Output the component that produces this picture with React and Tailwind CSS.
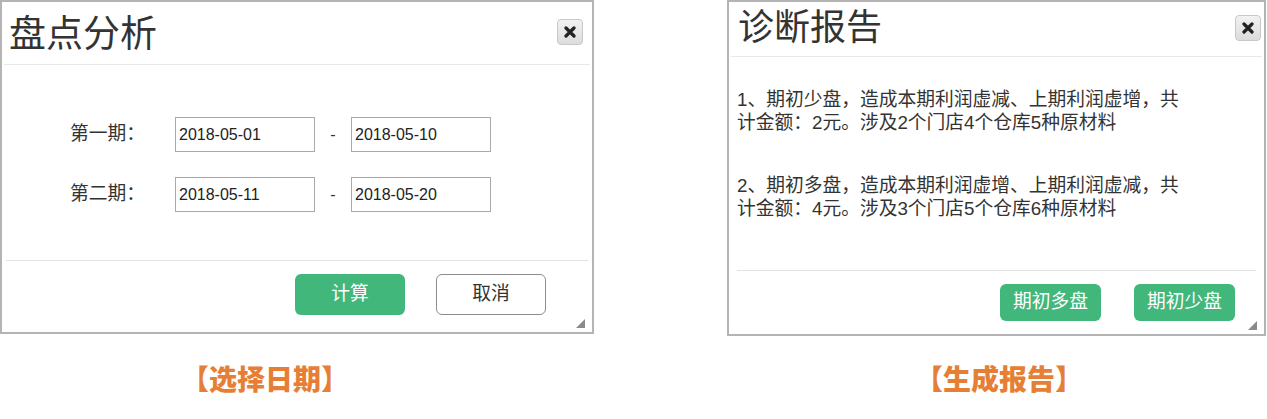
import React from 'react';

const cjk = { fontFamily: '"Liberation Sans", "Noto Sans CJK SC", sans-serif' };

const CloseBtn = () => (
    <button className="w-[26px] h-[26px] rounded-[4px] border border-[#c8c8c8] bg-gradient-to-b from-[#f2f2f2] to-[#dcdcdc] flex items-center justify-center">
        <svg width="12" height="12" viewBox="0 0 12 12">
            <path d="M2 2 L10 10 M10 2 L2 10" stroke="#222" strokeWidth="3.2" strokeLinecap="round" />
        </svg>
    </button>
);

const Grip = () => (
    <svg className="absolute right-[7px] bottom-[4px]" width="10" height="10" viewBox="0 0 10 10">
        <path d="M10 1 L10 10 L1 10 Z" fill="#8a8a8a" />
    </svg>
);

const DateInput = ({ value }) => (
    <div
        className="w-[140px] h-[35px] border border-[#a9a9a9] flex items-center pl-[3px] text-[16px] text-[#222]"
        style={{ fontFamily: '"Liberation Sans", Arial, sans-serif' }}
    >
        {value}
    </div>
);

const Period = ({ label, from, to }) => (
    <div className="flex items-center">
        <span className="w-[105px] text-[18.75px] text-[#333]">{label}</span>
        <DateInput value={from} />
        <span className="w-[36px] text-center text-[16px] text-[#333]">-</span>
        <DateInput value={to} />
    </div>
);

const Analysis = () => (
    <div className="relative w-[594px] h-[334px] border-2 border-[#b4b4b4] bg-white flex flex-col" style={cjk}>
        <div className="h-[63px] mx-[2px] border-b border-[#e8e8e8] flex items-center justify-between pl-[5px] pr-[7px]">
            <h2 className="text-[37px] leading-none text-[#333] pt-[3px]">盘点分析</h2>
            <div className="-mt-[2px]"><CloseBtn /></div>
        </div>
        <div className="h-[195px] flex flex-col gap-[25px] pt-[52px] pl-[68px]">
            <Period label="第一期：" from="2018-05-01" to="2018-05-10" />
            <Period label="第二期：" from="2018-05-11" to="2018-05-20" />
        </div>
        <div className="mx-[4px] border-t border-[#e2e2e2] flex justify-end gap-[31px] pt-[13px] pr-[42px]">
            <button className="w-[110px] h-[41px] rounded-[6px] bg-[#42b77b] text-white text-[18.75px]">计算</button>
            <button className="w-[110px] h-[41px] rounded-[6px] border border-[#8c8c8c] bg-white text-[#333] text-[18.75px]">取消</button>
        </div>
        <Grip />
    </div>
);

const Report = () => (
    <div className="relative w-[539px] h-[336px] border-2 border-[#b4b4b4] bg-white flex flex-col" style={cjk}>
        <div className="h-[55px] mx-[2px] border-b border-[#e8e8e8] flex items-center justify-between pl-[7px] pr-[1px]">
            <h2 className="text-[36px] leading-none text-[#333] pb-[2px]">诊断报告</h2>
            <div className="-mt-[3px]"><CloseBtn /></div>
        </div>
        <div className="h-[213px] pt-[31px] pl-[8px] text-[18.75px] leading-[23px] text-[#333]">
            <p className="mb-[40px]">1、期初少盘，造成本期利润虚减、上期利润虚增，共<br />计金额：2元。涉及2个门店4个仓库5种原材料</p>
            <p>2、期初多盘，造成本期利润虚增、上期利润虚减，共<br />计金额：4元。涉及3个门店5个仓库6种原材料</p>
        </div>
        <div className="mx-[8px] border-t border-[#e2e2e2] flex justify-end gap-[33px] pt-[13px] pr-[21px]">
            <button className="w-[101px] h-[37px] rounded-[6px] bg-[#42b77b] text-white text-[18.75px]">期初多盘</button>
            <button className="w-[101px] h-[37px] rounded-[6px] bg-[#42b77b] text-white text-[18.75px]">期初少盘</button>
        </div>
        <Grip />
    </div>
);

const Caption = ({ text, pad }) => (
    <div className={pad}>
        <span className="text-[28px] font-black text-[#e67f35] leading-none" style={cjk}>{text}</span>
    </div>
);

export default function App() {
    return (
        <div className="w-[1267px] h-[419px] bg-white flex">
            <div className="w-[594px] flex flex-col">
                <Analysis />
                <Caption text="【选择日期】" pad="pt-[33px] pl-[181px]" />
            </div>
            <div className="ml-[133px] w-[539px] flex flex-col">
                <Report />
                <Caption text="【生成报告】" pad="pt-[31px] pl-[188px]" />
            </div>
        </div>
    );
}
